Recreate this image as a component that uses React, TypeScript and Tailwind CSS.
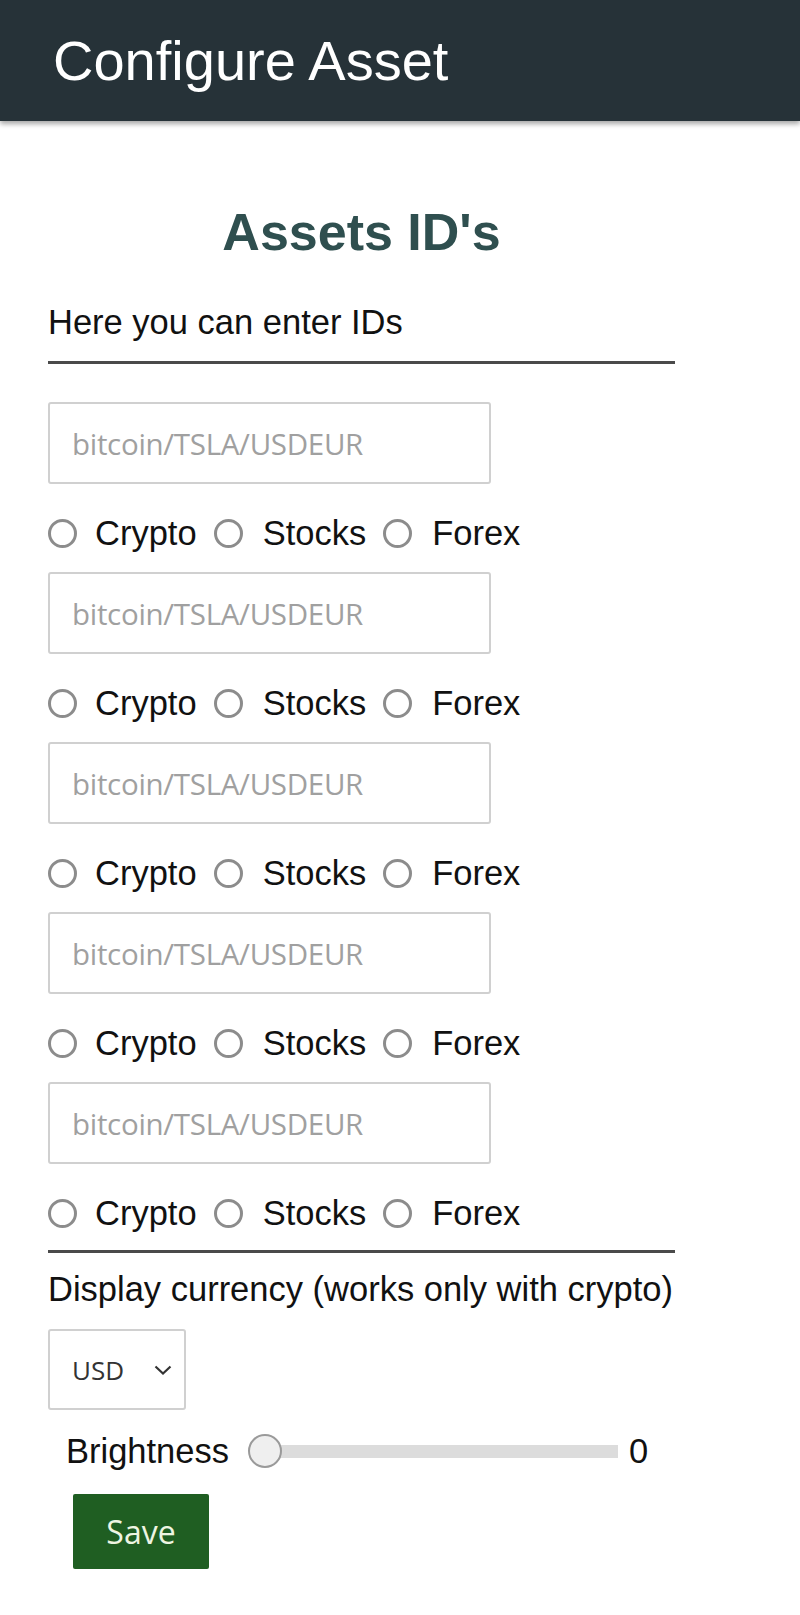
const ASSETS = [0, 1, 2, 3, 4]
const TYPES = ["Crypto", "Stocks", "Forex"]

function Radio() {
  return <span className="h-[29px] w-[29px] shrink-0 rounded-full border-[3px] border-[#8c8c8c] bg-white" />
}

function AssetBlock({ first }: { first: boolean }) {
  return (
    <div className={first ? "" : "mt-[19px]"}>
      <input
        type="text"
        placeholder="bitcoin/TSLA/USDEUR"
        className="block h-[82px] w-[443px] rounded-[3px] border-2 border-[#d0d0d0] bg-white pl-[22px] font-['Open_Sans',sans-serif] text-[29.5px] tracking-[-0.3px] text-[#333] outline-none placeholder:text-[#a0a0a0]"
      />
      <div className="mt-[29px] flex h-[40px] items-center">
        {TYPES.map((t, i) => (
          <label key={t} className={"flex items-center " + (i === 0 ? "" : "ml-[17px]")}>
            <Radio />
            <span className={i === 0 ? "ml-[18px]" : "ml-[20px]"}>{t}</span>
          </label>
        ))}
      </div>
    </div>
  )
}

export default function App() {
  return (
    <div className="min-h-[1615px] bg-white font-['Liberation_Sans',Arial,sans-serif] text-[34.5px] leading-[40px] text-[#111]">
      {/* Top bar */}
      <header className="relative z-10 flex h-[121px] items-center bg-[#263238] pl-[53px] shadow-[0_3px_5px_rgba(0,0,0,0.35)]">
        <h1 className="text-[56px] leading-none text-white">Configure Asset</h1>
      </header>

      <main className="ml-[48px] w-[627px] pt-[81px]">
        <h2 className="text-center text-[52px] font-bold leading-[60px] text-[#2f4f4f]">Assets ID's</h2>
        <p className="mt-[40px]">Here you can enter IDs</p>
        <div className="mt-[19px] h-[3px] bg-[#4a4a4a]" />

        <div className="mt-[38px]">
          {ASSETS.map((a) => (
            <AssetBlock key={a} first={a === 0} />
          ))}
        </div>

        <div className="mt-[17px] h-[3px] bg-[#4a4a4a]" />
        <p className="mt-[16px] whitespace-nowrap">Display currency (works only with crypto)</p>

        {/* Currency select */}
        <div className="mt-[20px] flex h-[81px] w-[138px] items-center rounded-[3px] border-2 border-[#d0d0d0] pl-[22px] font-['Open_Sans',sans-serif] text-[26px] text-[#333]">
          <span>USD</span>
          <svg viewBox="0 0 18 10" className="ml-[30px] h-[10px] w-[18px]" fill="none" stroke="#333" strokeWidth="2.2">
            <path d="M1.5 1.5l7.5 7 7.5-7" />
          </svg>
        </div>

        {/* Brightness */}
        <div className="ml-[18px] mt-[21px] flex h-[40px] items-center">
          <span>Brightness</span>
          <div className="ml-[19px] flex w-[370px] items-center">
            <span className="relative z-10 h-[34px] w-[34px] shrink-0 rounded-full border-2 border-[#9a9a9a] bg-[#efefef]" />
            <span className="-ml-[17px] h-[13px] flex-1 bg-[#dcdcdc]" />
          </div>
          <span className="ml-[11px]">0</span>
        </div>

        <button className="ml-[25px] mt-[23px] h-[75px] w-[136px] rounded-[2px] bg-[#1f5e22] font-['Open_Sans',sans-serif] text-[32px] text-[#eef5e2]">
          Save
        </button>
      </main>
    </div>
  )
}
